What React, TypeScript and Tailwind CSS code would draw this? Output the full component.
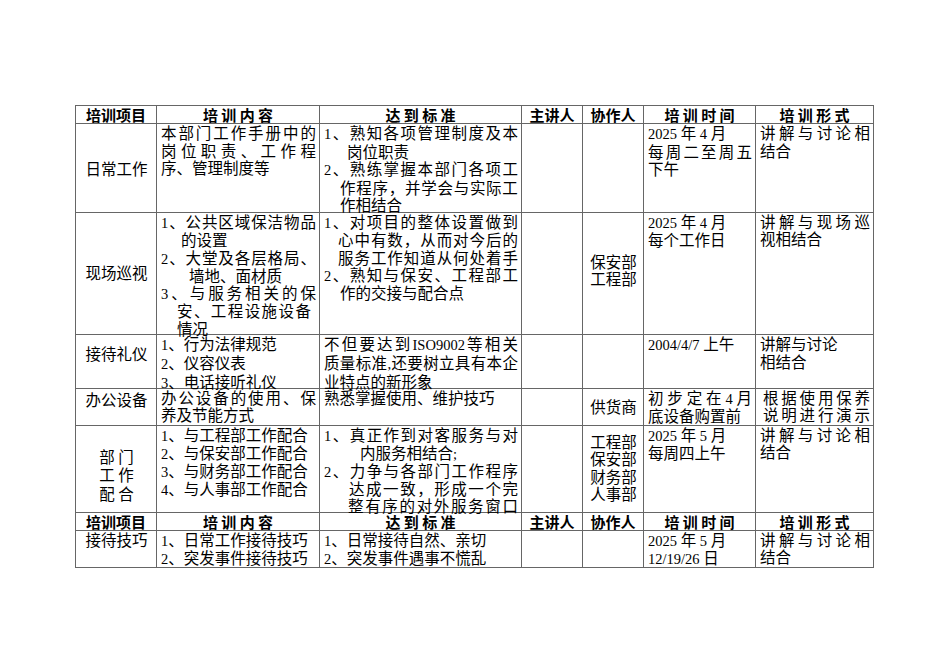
import type { ReactNode } from "react"

const ASCII = /^[\x20-\x7e]+$/

function Run({ s }: { s: string }) {
  const parts = s.split(/([\x20-\x7e]+)/).filter(Boolean)
  return (
    <>
      {parts.map((p, i) =>
        ASCII.test(p) ? (
          <span key={i} className="text-[14.5px]">
            {p}
          </span>
        ) : (
          <span key={i}>{p}</span>
        )
      )}
    </>
  )
}

// one printed line; j = spread to the full cell width
function L({ t, j, className = "" }: { t: string; j?: boolean; className?: string }) {
  if (j) {
    const toks = t.match(/[\x21-\x7e]+|[^\x20-\x7e]/g) ?? []
    return (
      <div className={`flex items-baseline justify-between whitespace-nowrap ${className}`}>
        {toks.map((k, i) => (
          <Run key={i} s={k} />
        ))}
      </div>
    )
  }
  return (
    <div className={`whitespace-nowrap ${className}`}>
      <Run s={t} />
    </div>
  )
}

function C({ children, className = "" }: { children?: ReactNode; className?: string }) {
  return (
    <div className={`border-r border-b border-[#666] pl-[4px] pr-[3px] pt-[1px] overflow-visible ${className}`}>
      {children}
    </div>
  )
}

function H({ t }: { t: string }) {
  return (
    <div className="flex items-center justify-center border-r border-b border-[#666] font-['Noto_Sans_CJK_SC',sans-serif] text-[15px] font-bold leading-[17px] whitespace-pre">
      {t}
    </div>
  )
}

function HeaderRow() {
  return (
    <>
      <H t="培训项目" />
      <H t="培 训 内 容" />
      <H t="达 到 标 准" />
      <H t="主讲人" />
      <H t="协作人" />
      <H t="培 训 时 间" />
      <H t="培 训 形 式" />
    </>
  )
}

export default function App() {
  return (
    <div className="h-[672px] w-[950px] bg-white pl-[75px] pt-[105px] text-black">
      <div className="grid w-fit grid-cols-[81px_163px_202px_61px_61px_112px_118px] grid-rows-[18px_89px_122px_54px_37px_87px_18px_37px] border-l border-t border-[#666] font-['Liberation_Serif','Noto_Sans_CJK_SC',serif] text-[15.5px] leading-[17.3px]">
        <HeaderRow />

        {/* 日常工作 */}
        <C className="pt-[37px] text-center">日常工作</C>
        <C className="leading-[17.6px]">
          <L j t="本部门工作手册中的" />
          <L j t="岗位职责、工作程" />
          <L t="序、管理制度等" />
        </C>
        <C className="leading-[17.6px]">
          <L j t="1、熟知各项管理制度及本" />
          <L t="岗位职责" className="pl-[23px]" />
          <L j t="2、熟练掌握本部门各项工" />
          <L j t="作程序，并学会与实际工" className="pl-[16px]" />
          <L t="作相结合" className="pl-[16px]" />
        </C>
        <C />
        <C />
        <C className="leading-[17.6px]">
          <L t="2025 年 4 月" />
          <L j t="每周二至周五" />
          <L t="下午" />
        </C>
        <C className="leading-[17.6px]">
          <L j t="讲解与讨论相" />
          <L t="结合" />
        </C>

        {/* 现场巡视 */}
        <C className="pt-[52px] text-center">现场巡视</C>
        <C>
          <L j t="1、公共区域保洁物品" />
          <L t="的设置" className="pl-[20px]" />
          <L j t="2、大堂及各层格局、" />
          <L t="墙地、面材质" className="pl-[28px]" />
          <L j t="3、与服务相关的保" />
          <L j t="安、工程设施设备" className="pl-[16px] pr-[5px]" />
          <L t="情况" className="pl-[16px]" />
        </C>
        <C>
          <L j t="1、对项目的整体设置做到" />
          <L j t="心中有数，从而对今后的" className="pl-[14px]" />
          <L j t="服务工作知道从何处着手" className="pl-[14px]" />
          <L j t="2、熟知与保安、工程部工" />
          <L t="作的交接与配合点" className="pl-[16px]" />
        </C>
        <C />
        <C className="pt-[41px] text-center">
          <L t="保安部" />
          <L t="工程部" />
        </C>
        <C>
          <L t="2025 年 4 月" />
          <L t="每个工作日" />
        </C>
        <C>
          <L j t="讲解与现场巡" />
          <L t="视相结合" />
        </C>

        {/* 接待礼仪 */}
        <C className="pt-[11px] text-center">接待礼仪</C>
        <C className="pt-0 leading-[17.8px]">
          <L t="1、行为法律规范" />
          <L t="2、仪容仪表" />
          <L t="3、电话接听礼仪" />
        </C>
        <C className="pt-0 leading-[17.8px]">
          <L j t="不但要达到 ISO9002 等相关" />
          <L j t="质量标准,还要树立具有本企" />
          <L t="业特点的新形象" />
        </C>
        <C />
        <C />
        <C className="pt-0">
          <L t="2004/4/7 上午" />
        </C>
        <C className="pt-0 leading-[17.8px]">
          <L t="讲解与讨论" />
          <L t="相结合" />
        </C>

        {/* 办公设备 */}
        <C className="pt-[3px] text-center">办公设备</C>
        <C>
          <L j t="办公设备的使用、保" />
          <L t="养及节能方式" />
        </C>
        <C>
          <L t="熟悉掌握使用、维护技巧" />
        </C>
        <C />
        <C className="pt-[10px] text-center">供货商</C>
        <C>
          <L j t="初步定在 4 月" />
          <L t="底设备购置前" />
        </C>
        <C>
          <L j t="根据使用保养" className="pl-[3px]" />
          <L j t="说明进行演示" className="pl-[3px]" />
        </C>

        {/* 部门工作配合 */}
        <C className="pt-[23px] text-center">
          <L t="部 门" />
          <L t="工 作" />
          <L t="配 合" />
        </C>
        <C className="pt-0 leading-[17px]">
          <L t="1、与工程部工作配合" />
          <L t="2、与保安部工作配合" />
          <L t="3、与财务部工作配合" />
          <L t="4、与人事部工作配合" />
        </C>
        <C className="pt-0 leading-[17px]">
          <L j t="1、真正作到对客服务与对" />
          <L t="内服务相结合;" className="pl-[36px]" />
          <L j t="2、力争与各部门工作程序" />
          <L j t="达成一致，形成一个完" className="pl-[25px]" />
          <L j t="整有序的对外服务窗口" className="pl-[24px]" />
        </C>
        <C />
        <C className="pt-[8px] text-center">
          <L t="工程部" />
          <L t="保安部" />
          <L t="财务部" />
          <L t="人事部" />
        </C>
        <C className="pt-0 leading-[17px]">
          <L t="2025 年 5 月" />
          <L t="每周四上午" />
        </C>
        <C className="pt-0 leading-[17px]">
          <L j t="讲解与讨论相" />
          <L t="结合" />
        </C>

        <HeaderRow />

        {/* 接待技巧 */}
        <C className="text-center">接待技巧</C>
        <C>
          <L t="1、日常工作接待技巧" />
          <L t="2、突发事件接待技巧" />
        </C>
        <C>
          <L t="1、日常接待自然、亲切" />
          <L t="2、突发事件遇事不慌乱" />
        </C>
        <C />
        <C />
        <C>
          <L t="2025 年 5 月" />
          <L t="12/19/26 日" />
        </C>
        <C>
          <L j t="讲解与讨论相" />
          <L t="结合" />
        </C>
      </div>
    </div>
  )
}
